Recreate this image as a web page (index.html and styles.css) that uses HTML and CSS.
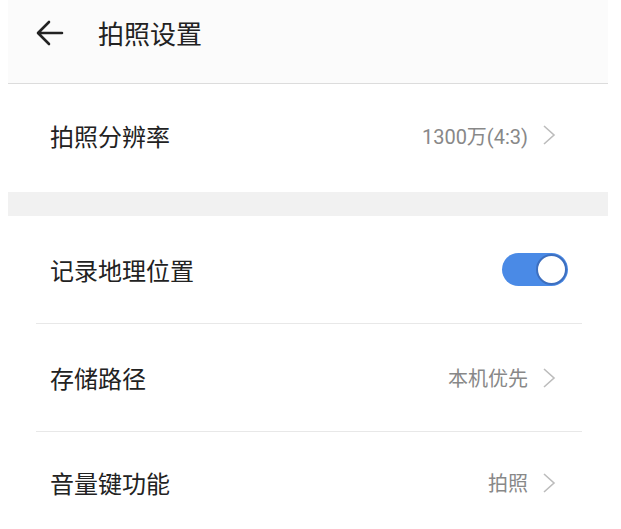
FILE: index.html
```html
<!DOCTYPE html>
<html lang="zh-CN">
<head>
    <meta charset="UTF-8">
    <meta name="viewport" content="width=device-width, initial-scale=1.0">
    <title>拍照设置</title>
    <link rel="stylesheet" href="styles.css">
</head>
<body>
    <div class="screen">
        <div class="header">
            <svg class="back" width="28" height="26" viewBox="0 0 28 26">
                <path d="M26 13H3M13 2L2 13l11 11" fill="none" stroke="#222" stroke-width="2.6" stroke-linecap="round" stroke-linejoin="round"/>
            </svg>
            <span class="title">拍照设置</span>
        </div>

        <div class="group">
            <div class="row lift">
                <span class="label">拍照分辨率</span>
                <span class="value">1300万(4:3)</span>
                <svg class="chev" width="14" height="22" viewBox="0 0 14 22">
                    <path d="M2 2l10 9-10 9" fill="none" stroke="#bcbcbc" stroke-width="1.6"/>
                </svg>
            </div>
        </div>

        <div class="band"></div>

        <div class="group inset">
            <div class="row">
                <span class="label">记录地理位置</span>
                <span class="toggle on"><span class="knob"></span></span>
            </div>
            <div class="row">
                <span class="label">存储路径</span>
                <span class="value">本机优先</span>
                <svg class="chev" width="14" height="22" viewBox="0 0 14 22">
                    <path d="M2 2l10 9-10 9" fill="none" stroke="#bcbcbc" stroke-width="1.6"/>
                </svg>
            </div>
            <div class="row lift">
                <span class="label">音量键功能</span>
                <span class="value">拍照</span>
                <svg class="chev" width="14" height="22" viewBox="0 0 14 22">
                    <path d="M2 2l10 9-10 9" fill="none" stroke="#bcbcbc" stroke-width="1.6"/>
                </svg>
            </div>
        </div>
    </div>
</body>
</html>
```

FILE: styles.css
```css
body {
    margin: 0;
    background: #fff;
    font-family: Roboto, "Noto Sans CJK SC", sans-serif;
    color: #222;
}
.screen {
    width: 600px;
    margin-left: 8px;
}
.header {
    height: 83px;
    background: #fbfbfb;
    border-bottom: 1px solid #dcdcdc;
    display: flex;
    align-items: center;
    padding-left: 28px;
}
.back {
    margin-right: 34px;
    margin-top: -18px;
}
.title {
    font-size: 26px;
    margin-top: -18px;
}
.band {
    height: 24px;
    background: #f1f1f1;
}
.row {
    height: 107px;
    display: flex;
    align-items: center;
    padding: 0 52px 0 42px;
}
.group .row + .row {
    border-top: 1px solid #e8e8e8;
}
.inset .row {
    margin: 0 26px 0 28px;
    padding: 0 26px 0 14px;
}
.row.lift {
    box-sizing: border-box;
    height: 108px;
    padding-bottom: 6px;
}
.label {
    font-size: 24px;
    flex: 1;
}
.value {
    font-size: 20px;
    color: #888;
    margin-right: 14px;
}
.chev {
    display: block;
}
.toggle {
    width: 66px;
    height: 33px;
    border-radius: 17px;
    background: #4a8ae6;
    position: relative;
    margin-right: -12px;
}
.knob {
    position: absolute;
    right: 1px;
    top: 1px;
    width: 27px;
    height: 27px;
    border-radius: 50%;
    background: #fff;
    border: 2px solid #3d6fbf;
}
```
